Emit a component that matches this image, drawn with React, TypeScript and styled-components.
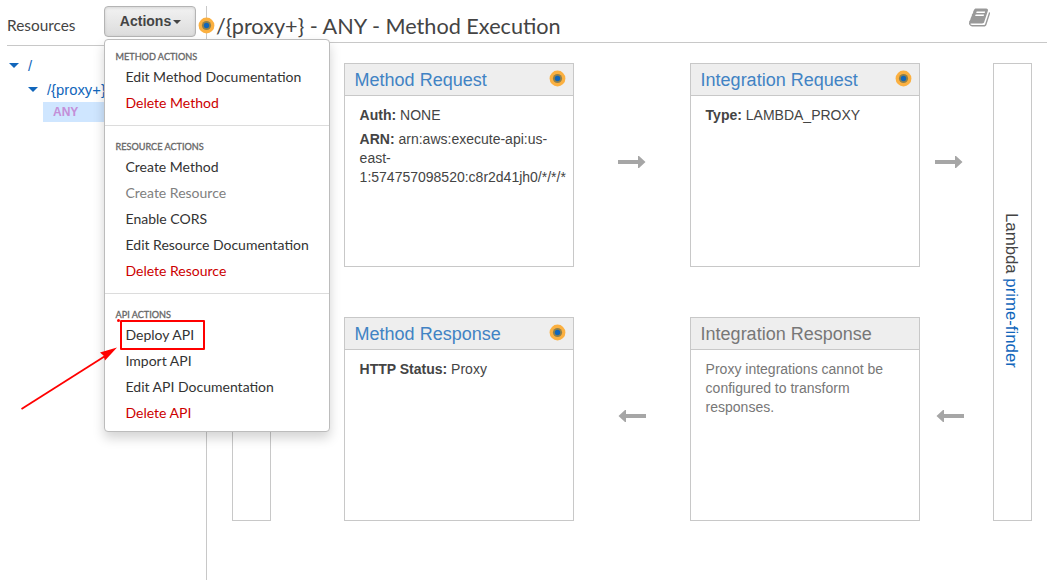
import React from "react";
import styled, { createGlobalStyle } from "styled-components";

const GlobalStyle = createGlobalStyle`
  * { box-sizing: border-box; }
  body {
    margin: 0;
    background: #fff;
    color: #444;
    font-family: "Liberation Sans", Arial, sans-serif;
    font-size: 14px;
    overflow: hidden;
  }
`;

const Page = styled.div`
  display: flex;
  width: 1052px;
  height: 580px;
  padding-top: 6px;
`;

const Sidebar = styled.aside`
  width: 207px;
  flex: none;
  border-right: 1px solid #c8c8c8;
  padding-left: 7px;
`;

const SidebarHeader = styled.header`
  display: flex;
  justify-content: space-between;
  height: 40px;
  padding-right: 10px;
  border-bottom: 1px solid #c8c8c8;
`;

const SidebarTitle = styled.h2`
  margin: 0;
  font: 400 15.4px/39px Lato, sans-serif;
`;

const ActionsWrap = styled.div`
  position: relative;
  z-index: 2;
`;

const ActionsButton = styled.button`
  display: flex;
  align-items: center;
  justify-content: center;
  gap: 2px;
  width: 92px;
  height: 31px;
  padding: 0 0 1px 1px;
  border: 1px solid #b4b4b4;
  border-radius: 4px;
  background: linear-gradient(#f2f2f2, #dcdcdc);
  box-shadow: inset 0 1px 3px rgba(0, 0, 0, 0.12);
  color: #444;
  font: 700 14px "Liberation Sans", Arial, sans-serif;
`;

const Caret = styled.span`
  border: 4px solid transparent;
  border-top-color: currentColor;
  border-bottom: 0;
  margin-top: 2px;
`;

const Menu = styled.div`
  position: absolute;
  top: 33px;
  left: 0;
  width: 226px;
  height: 393px;
  border: 1px solid #bcbcbc;
  border-radius: 4px;
  background: #fff;
  box-shadow: 0 6px 12px rgba(0, 0, 0, 0.175);
`;

const MenuGroup = styled.section`
  padding: 10px 0 9px 10.5px;
  & + & {
    border-top: 1px solid #dcdcdc;
    padding-top: 14px;
  }
`;

const MenuLabel = styled.div`
  height: 14px;
  font: 400 9.15px/14px Lato, sans-serif;
  color: #666;
  -webkit-text-stroke: 0.3px #666;
`;

const MenuItem = styled.div<{ $tone?: "danger" | "muted" }>`
  height: 26px;
  padding-left: 10px;
  font: 400 14px/26px Lato, sans-serif;
  white-space: nowrap;
  color: ${({ $tone }) => ($tone === "danger" ? "#c00" : $tone === "muted" ? "#808080" : "#333")};
`;

const Annotation = styled.svg`
  position: absolute;
  left: 0;
  top: 0;
  z-index: 3;
  pointer-events: none;
`;

const Tree = styled.nav`
  padding-top: 8px;
  color: #1166bb;
  font-size: 14.8px;
`;

const TreeRow = styled.div<{ $depth: number }>`
  display: flex;
  align-items: center;
  gap: 9px;
  height: 24px;
  padding-left: ${({ $depth }) => 2 + $depth * 19}px;
`;

const TreeCaret = styled.span`
  margin-bottom: 1px;
  border: 5px solid transparent;
  border-top-color: #1166bb;
  border-bottom: 0;
`;

const MethodRow = styled.div`
  margin-left: 36px;
  height: 20px;
  padding-left: 10px;
  background: #cfe6ff;
  color: #c48fd8;
  font: 700 12px/20px "Liberation Sans", Arial, sans-serif;
`;

const Main = styled.main`
  flex: 1;
  min-width: 0;
  padding-right: 5px;
`;

const MainHeader = styled.header`
  display: flex;
  justify-content: space-between;
  height: 37px;
  padding: 0 57px 0 9px;
  border-bottom: 1px solid #c8c8c8;
`;

const Title = styled.h1`
  position: relative;
  margin: 0;
  font: 400 21.65px/40px Lato, sans-serif;
  white-space: nowrap;
`;

const TitleDot = styled.span`
  position: absolute;
  left: -18px;
  top: 11px;
  z-index: 1;
  display: flex;
`;

const Flow = styled.div`
  display: grid;
  grid-template-columns: 39px 73px 230px 116px 230px 73px 39px;
  grid-template-rows: 204px 204px;
  row-gap: 50px;
  margin: 20px 0 0 25px;
`;

const Endpoint = styled.div<{ $column: number }>`
  grid-column: ${({ $column }) => $column};
  grid-row: 1 / 3;
  display: flex;
  align-items: center;
  justify-content: center;
  padding: 0 3px 4px 0;
  border: 1px solid #c8c8c8;
`;

const VerticalText = styled.div`
  writing-mode: vertical-rl;
  font-size: 16.8px;
  white-space: nowrap;
  a { color: #1166bb; }
`;

const Card = styled.article<{ $column: number; $row: number; $muted?: boolean }>`
  grid-column: ${({ $column }) => $column};
  grid-row: ${({ $row }) => $row};
  border: 1px solid #c8c8c8;
  color: ${({ $muted }) => ($muted ? "#777" : "#444")};
`;

const CardHeader = styled.header`
  display: flex;
  justify-content: space-between;
  height: 32px;
  padding: 6px 7px 0 9.6px;
  background: #eee;
  border-bottom: 1px solid #c8c8c8;
`;

const CardTitle = styled.h3<{ $muted?: boolean }>`
  margin: 0;
  font-size: 18px;
  font-weight: 400;
  line-height: 20px;
  color: ${({ $muted }) => ($muted ? "#777" : "#4183c4")};
`;

const CardBody = styled.div`
  padding: 10px 0 0 14.6px;
  line-height: 19px;
  p { margin: 0 0 5px; }
`;

const ArrowCell = styled.div<{ $column: number; $row: number; $offset: number }>`
  grid-column: ${({ $column }) => $column};
  grid-row: ${({ $row }) => $row};
  padding: 92px 0 0 ${({ $offset }) => $offset}px;
`;

const Dot = () => (
  <svg width="17" height="17" viewBox="0 0 17 17">
    <circle cx="8.5" cy="8.5" r="7.9" fill="#fbb040" />
    <circle cx="8.5" cy="8.5" r="4.6" fill="#90804c" />
    <circle cx="8.5" cy="8.5" r="2.7" fill="#1166bb" />
  </svg>
);

const Arrow = ({ left }: { left?: boolean }) => (
  <svg width="28" height="14" viewBox="0 0 28 14" display="block">
    <path
      d="M0 5H20V1H21L27.5 7L21 13H20V9H0Z"
      fill="#a6a6a6"
      transform={left ? "translate(28 0) scale(-1 1)" : undefined}
    />
  </svg>
);

const BookIcon = styled.svg`
  display: block;
  margin-top: 0.5px;
`;

const Book = () => (
  <BookIcon width="21" height="21" viewBox="0 0 1664 1792" fill="#999" preserveAspectRatio="none">
    <path d="M1639 478q40 57 18 129l-275 906q-19 64-76.500 107.500t-122.500 43.500h-923q-77 0-148.500-53.500t-99.500-131.500q-24-67-2-127 0-4 3-27t4-37q1-8-3-21.500t-3-19.500q2-11 8-21t16.500-23.500 16.500-23.500q23-38 45-91.500t30-91.500q3-10 .5-30t-.5-28q3-11 17-28t17-23q21-36 42-92t25-90q1-9-2.500-32t.5-28q4-13 22-30.500t22-22.500q19-26 42.500-84.500t27.500-96.500q1-8-3-25.500t-2-26.500q2-8 9-18t18-23 17-21q8-12 16.500-30.500t15-35 16-36 19.500-32 26.500-23.500 36-11.500 47.500 5.500l-1 3q38-9 51-9h761q74 0 114 56t18 130l-274 906q-36 119-71.500 153.500t-128.500 34.500h-869q-27 0-38 15-11 16-1 43 24 70 144 70h923q29 0 56-15.500t35-41.500l300-987q7-22 5-57 38 15 59 43zm-1064 2q-4 13 2 22.500t20 9.500h608q13 0 25.500-9.500t16.500-22.500l21-64q4-13-2-22.500t-20-9.500h-608q-13 0-25.500 9.500t-16.500 22.500zm-83 256q-4 13 2 22.500t20 9.500h608q13 0 25.500-9.500t16.500-22.500l21-64q4-13-2-22.500t-20-9.500h-608q-13 0-25.500 9.500t-16.500 22.500z" />
  </BookIcon>
);

export default function App() {
  return (
    <>
      <GlobalStyle />
      <Page>
        <Sidebar>
          <SidebarHeader>
            <SidebarTitle>Resources</SidebarTitle>
            <ActionsWrap>
              <ActionsButton>
                Actions
                <Caret />
              </ActionsButton>
              <Menu>
                <MenuGroup>
                  <MenuLabel>METHOD ACTIONS</MenuLabel>
                  <MenuItem>Edit Method Documentation</MenuItem>
                  <MenuItem $tone="danger">Delete Method</MenuItem>
                </MenuGroup>
                <MenuGroup>
                  <MenuLabel>RESOURCE ACTIONS</MenuLabel>
                  <MenuItem>Create Method</MenuItem>
                  <MenuItem $tone="muted">Create Resource</MenuItem>
                  <MenuItem>Enable CORS</MenuItem>
                  <MenuItem>Edit Resource Documentation</MenuItem>
                  <MenuItem $tone="danger">Delete Resource</MenuItem>
                </MenuGroup>
                <MenuGroup>
                  <MenuLabel>API ACTIONS</MenuLabel>
                  <MenuItem>Deploy API</MenuItem>
                  <MenuItem>Import API</MenuItem>
                  <MenuItem>Edit API Documentation</MenuItem>
                  <MenuItem $tone="danger">Delete API</MenuItem>
                </MenuGroup>
              </Menu>
            </ActionsWrap>
          </SidebarHeader>
          <Tree>
            <TreeRow $depth={0}>
              <TreeCaret />/
            </TreeRow>
            <TreeRow $depth={1}>
              <TreeCaret />
              {"/{proxy+}"}
            </TreeRow>
            <MethodRow>ANY</MethodRow>
          </Tree>
        </Sidebar>
        <Main>
          <MainHeader>
            <Title>
              <TitleDot>
                <Dot />
              </TitleDot>
              {"/{proxy+} - ANY - Method Execution"}
            </Title>
            <Book />
          </MainHeader>
          <Flow>
            <Endpoint $column={1} />
            <Card $column={3} $row={1}>
              <CardHeader>
                <CardTitle>Method Request</CardTitle>
                <Dot />
              </CardHeader>
              <CardBody>
                <p>
                  <b>Auth:</b> NONE
                </p>
                <p>
                  <b>ARN:</b> arn:aws:execute-api:us-
                  <br />
                  east-
                  <br />
                  1:574757098520:c8r2d41jh0/*/*/*
                </p>
              </CardBody>
            </Card>
            <ArrowCell $column={4} $row={1} $offset={44}>
              <Arrow />
            </ArrowCell>
            <Card $column={5} $row={1}>
              <CardHeader>
                <CardTitle>Integration Request</CardTitle>
                <Dot />
              </CardHeader>
              <CardBody>
                <p>
                  <b>Type:</b> LAMBDA_PROXY
                </p>
              </CardBody>
            </Card>
            <ArrowCell $column={6} $row={1} $offset={15}>
              <Arrow />
            </ArrowCell>
            <Card $column={3} $row={2}>
              <CardHeader>
                <CardTitle>Method Response</CardTitle>
                <Dot />
              </CardHeader>
              <CardBody>
                <p>
                  <b>HTTP Status:</b> Proxy
                </p>
              </CardBody>
            </Card>
            <ArrowCell $column={4} $row={2} $offset={44}>
              <Arrow left />
            </ArrowCell>
            <Card $column={5} $row={2} $muted>
              <CardHeader>
                <CardTitle $muted>Integration Response</CardTitle>
              </CardHeader>
              <CardBody>
                <p>
                  Proxy integrations cannot be
                  <br />
                  configured to transform
                  <br />
                  responses.
                </p>
              </CardBody>
            </Card>
            <ArrowCell $column={6} $row={2} $offset={15.5}>
              <Arrow left />
            </ArrowCell>
            <Endpoint $column={7}>
              <VerticalText>
                Lambda <a>prime-finder</a>
              </VerticalText>
            </Endpoint>
          </Flow>
        </Main>
      </Page>
      <Annotation width="230" height="430" viewBox="0 0 230 430">
        <rect x="121" y="321" width="83" height="28" fill="none" stroke="#f00" strokeWidth="2" strokeLinejoin="round" />
        <circle cx="118.500" cy="320.500" r="1.500" fill="#f00" />
        <path d="M21.500 409L106 355.500" stroke="#f00" strokeWidth="1.800" />
        <path d="M117 347.500L100 352.500L103.500 355.500L105 360.500Z" fill="#f00" />
      </Annotation>
    </>
  );
}
